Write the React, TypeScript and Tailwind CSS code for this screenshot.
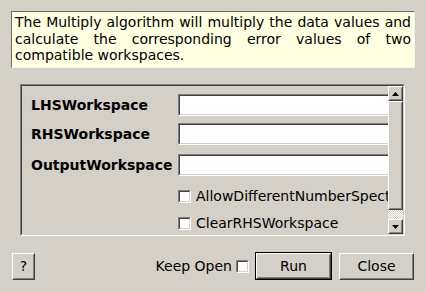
import React from "react"

const font = { fontFamily: '"DejaVu Sans", sans-serif' }

function Sunken({ className, children }: { className?: string; children?: React.ReactNode }) {
  return (
    <div className={`border border-t-[#808080] border-l-[#808080] border-b-white border-r-white ${className ?? ""}`}>
      <div className="h-full w-full border border-t-[#404040] border-l-[#404040] border-b-[#d4d0c8] border-r-[#d4d0c8] bg-white">
        {children}
      </div>
    </div>
  )
}

function Raised({ className, children }: { className?: string; children?: React.ReactNode }) {
  return (
    <div className={`border border-t-white border-l-white border-b-[#404040] border-r-[#404040] ${className ?? ""}`}>
      <div className="flex h-full w-full items-center justify-center border border-t-[#d4d0c8] border-l-[#d4d0c8] border-b-[#808080] border-r-[#808080] bg-[#d4d0c8]">
        {children}
      </div>
    </div>
  )
}

function Check() {
  return <Sunken className="h-[13px] w-[13px] shrink-0" />
}

function Arrow({ down }: { down?: boolean }) {
  return (
    <svg width="7" height="4" viewBox="0 0 7 4">
      {down ? <polygon points="0,0 7,0 3.5,4" fill="#000" /> : <polygon points="0,4 7,4 3.5,0" fill="#000" />}
    </svg>
  )
}

function FieldRow({ label, className }: { label: string; className: string }) {
  return (
    <div className={`flex h-[22px] items-center ${className}`}>
      <span className="w-[147px] shrink-0 text-[14px] font-bold text-black">{label}</span>
      <Sunken className="h-[22px] w-[216px] shrink-0" />
    </div>
  )
}

function CheckRow({ label, className }: { label: string; className: string }) {
  return (
    <div className={`flex h-[22px] items-center pl-[147px] ${className}`}>
      <Check />
      <span className="ml-[5px] whitespace-nowrap text-[14px] text-black">{label}</span>
    </div>
  )
}

export default function App() {
  return (
    <div style={font} className="flex h-[292px] w-[426px] flex-col overflow-hidden bg-[#d4d0c8]">
      <div className="ml-[11px] mt-[11px] h-[57px] w-[404px] border border-t-[#6e6e6e] border-l-[#6e6e6e] border-b-[#f4f4f4] border-r-[#f4f4f4] bg-[#ffffe1] px-[3px] pt-[2px] text-justify text-[14px] leading-[16.5px] text-black">
        The Multiply algorithm will multiply the data values and calculate the corresponding error values of two compatible workspaces.
      </div>

      <div className="ml-[20px] mt-[16px] h-[152px] w-[385px] border border-t-[#808080] border-l-[#808080] border-b-white border-r-white">
        <div className="flex h-full w-full border border-t-[#404040] border-l-[#404040] border-b-[#d4d0c8] border-r-[#d4d0c8]">
          <div className="flex flex-1 flex-col overflow-hidden pl-[9px]">
            <FieldRow label="LHSWorkspace" className="mt-[8px]" />
            <FieldRow label="RHSWorkspace" className="mt-[7px]" />
            <FieldRow label="OutputWorkspace" className="mt-[9px]" />
            <CheckRow label="AllowDifferentNumberSpectra" className="mt-[10px]" />
            <CheckRow label="ClearRHSWorkspace" className="mt-[6px]" />
          </div>
          <div className="flex w-[15px] shrink-0 flex-col">
            <Raised className="h-[15px] w-[15px]">
              <Arrow />
            </Raised>
            <Raised className="h-[109px] w-[15px]" />
            <div className="h-[9px] w-[15px] bg-[repeating-conic-gradient(#ffffff_0%_25%,#d4d0c8_0%_50%)] bg-[length:2px_2px]" />
            <Raised className="h-[15px] w-[15px]">
              <Arrow down />
            </Raised>
          </div>
        </div>
      </div>

      <div className="mt-[16px] flex h-[28px] items-center px-[12px]">
        <Raised className="h-[27px] w-[23px]">
          <span className="text-[14px] text-black">?</span>
        </Raised>
        <div className="flex-1" />
        <span className="text-[14px] text-black">Keep Open</span>
        <div className="ml-[4px]">
          <Check />
        </div>
        <div className="ml-[6px] h-[28px] w-[77px] border border-black">
          <Raised className="h-full w-full">
            <span className="text-[14px] text-black">Run</span>
          </Raised>
        </div>
        <Raised className="ml-[7px] h-[27px] w-[75px]">
          <span className="text-[14px] text-black">Close</span>
        </Raised>
      </div>
    </div>
  )
}
